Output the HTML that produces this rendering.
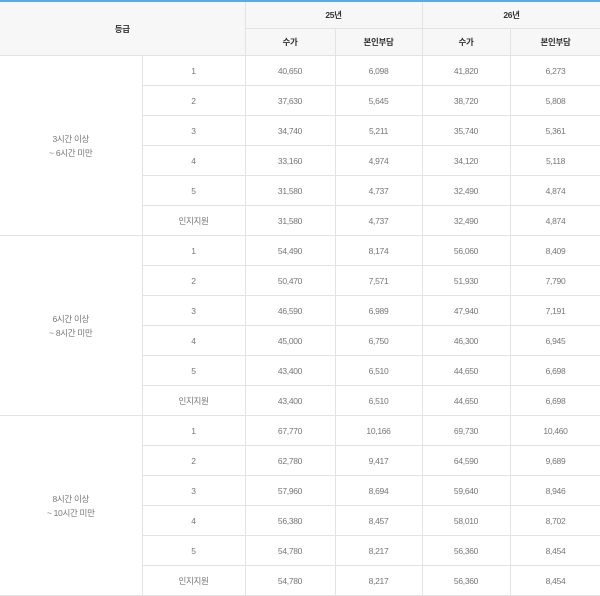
<!DOCTYPE html>
<html><head><meta charset="utf-8"><style>
body{margin:0;background:#fff;width:600px;height:558px;overflow:hidden;font-family:"Liberation Sans","Noto Sans CJK KR",sans-serif;}
table{border-collapse:collapse;table-layout:fixed;width:601px;border-top:2px solid #5aa9e6;}
td,th{border:1px solid #e3e3e3;text-align:center;font-size:8.5px;color:#777;padding:0;height:29px;letter-spacing:-0.3px}
th{background:#f7f7f7;color:#333;font-weight:bold;height:26px}
td.g{line-height:14px}
tr:first-child th{border-top:none}
td:first-child,th:first-child{border-left:none}
</style></head><body>
<table>
<colgroup><col style="width:142px"><col style="width:103px"><col style="width:90px"><col style="width:87px"><col style="width:88px"><col style="width:91px"></colgroup>
<tr><th colspan="2" rowspan="2">등급</th><th colspan="2">25년</th><th colspan="2">26년</th></tr>
<tr><th>수가</th><th>본인부담</th><th>수가</th><th>본인부담</th></tr>
<tr><td rowspan="6" class="g">3시간 이상<br>~ 6시간 미만</td><td>1</td><td>40,650</td><td>6,098</td><td>41,820</td><td>6,273</td></tr>
<tr><td>2</td><td>37,630</td><td>5,645</td><td>38,720</td><td>5,808</td></tr>
<tr><td>3</td><td>34,740</td><td>5,211</td><td>35,740</td><td>5,361</td></tr>
<tr><td>4</td><td>33,160</td><td>4,974</td><td>34,120</td><td>5,118</td></tr>
<tr><td>5</td><td>31,580</td><td>4,737</td><td>32,490</td><td>4,874</td></tr>
<tr><td>인지지원</td><td>31,580</td><td>4,737</td><td>32,490</td><td>4,874</td></tr>
<tr><td rowspan="6" class="g">6시간 이상<br>~ 8시간 미만</td><td>1</td><td>54,490</td><td>8,174</td><td>56,060</td><td>8,409</td></tr>
<tr><td>2</td><td>50,470</td><td>7,571</td><td>51,930</td><td>7,790</td></tr>
<tr><td>3</td><td>46,590</td><td>6,989</td><td>47,940</td><td>7,191</td></tr>
<tr><td>4</td><td>45,000</td><td>6,750</td><td>46,300</td><td>6,945</td></tr>
<tr><td>5</td><td>43,400</td><td>6,510</td><td>44,650</td><td>6,698</td></tr>
<tr><td>인지지원</td><td>43,400</td><td>6,510</td><td>44,650</td><td>6,698</td></tr>
<tr><td rowspan="6" class="g">8시간 이상<br>~ 10시간 미만</td><td>1</td><td>67,770</td><td>10,166</td><td>69,730</td><td>10,460</td></tr>
<tr><td>2</td><td>62,780</td><td>9,417</td><td>64,590</td><td>9,689</td></tr>
<tr><td>3</td><td>57,960</td><td>8,694</td><td>59,640</td><td>8,946</td></tr>
<tr><td>4</td><td>56,380</td><td>8,457</td><td>58,010</td><td>8,702</td></tr>
<tr><td>5</td><td>54,780</td><td>8,217</td><td>56,360</td><td>8,454</td></tr>
<tr><td>인지지원</td><td>54,780</td><td>8,217</td><td>56,360</td><td>8,454</td></tr>
</table>
</body></html>
